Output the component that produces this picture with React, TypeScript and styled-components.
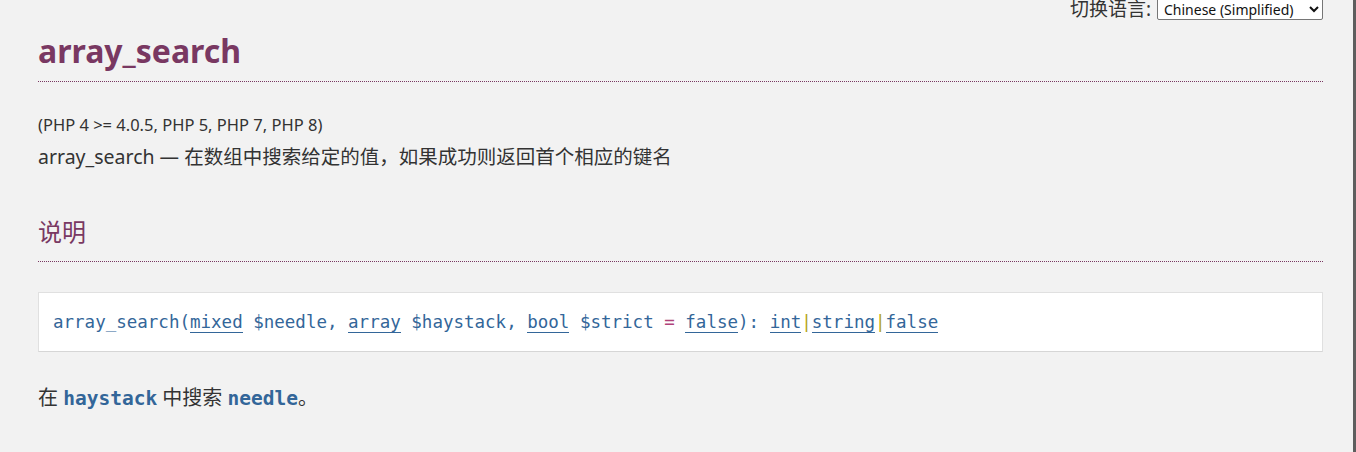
import styled, { createGlobalStyle } from 'styled-components'

const GlobalStyle = createGlobalStyle`
    html, body {
        margin: 0;
        padding: 0;
        background-color: #f2f2f2;
        overflow: hidden;
    }
    body {
        font-family: 'Noto Sans', 'Noto Sans CJK SC', sans-serif;
        color: #333;
    }
`

const sans = `'Noto Sans', 'Noto Sans CJK SC', sans-serif`
const mono = `'DejaVu Sans Mono', 'Noto Sans CJK SC', monospace`

export default function App() {
    return (
        <Screen>
            <GlobalStyle />
            <Page>
                <LangBar>
                    <LangLabel htmlFor="changelang">切换语言:</LangLabel>
                    <LangSelect id="changelang" defaultValue="zh">
                        <option value="en">English</option>
                        <option value="zh">Chinese (Simplified)</option>
                    </LangSelect>
                </LangBar>

                <Title>array_search</Title>

                <VerInfo>(PHP 4 &gt;= 4.0.5, PHP 5, PHP 7, PHP 8)</VerInfo>
                <RefPurpose>array_search — 在数组中搜索给定的值，如果成功则返回首个相应的键名</RefPurpose>

                <SectionTitle>说明</SectionTitle>

                <MethodSynopsis>
                    <MethodName>array_search</MethodName>(<TypeLink>mixed</TypeLink> <Var>$needle</Var>,{' '}
                    <TypeLink>array</TypeLink> <Var>$haystack</Var>, <TypeLink>bool</TypeLink> <Var>$strict</Var>{' '}
                    <Op>=</Op> <TypeLink>false</TypeLink>): <TypeLink>int</TypeLink>
                    <Pipe>|</Pipe>
                    <TypeLink>string</TypeLink>
                    <Pipe>|</Pipe>
                    <TypeLink>false</TypeLink>
                </MethodSynopsis>

                <Para>
                    在 <Param>haystack</Param> 中搜索 <Param>needle</Param>。
                </Para>
            </Page>
            <Edge />
        </Screen>
    )
}

const Screen = styled.div`
    display: flex;
    width: 1356px;
    height: 452px;
    overflow: hidden;
`

const Page = styled.div`
    flex: 1;
    padding: 0 30px 0 38px;
    display: flex;
    flex-direction: column;
`

const Edge = styled.div`
    width: 3px;
    background-color: #5e5e5e;
`

const LangBar = styled.div`
    display: flex;
    justify-content: flex-end;
    align-items: center;
    gap: 6px;
    height: 20px;
    margin-top: -1px;
`

const LangLabel = styled.label`
    font-family: ${sans};
    font-size: 19px;
    line-height: 20px;
    color: #333;
`

const LangSelect = styled.select`
    font-family: ${sans};
    font-size: 14px;
    height: 22px;
    width: 166px;
    padding: 0 2px;
    border: 1px solid #767676;
    border-radius: 2px;
    background: #fff;
    color: #111;
`

const Title = styled.h1`
    margin: 10px 0 0 0;
    font-family: ${sans};
    font-size: 32px;
    font-weight: 700;
    line-height: 44px;
    color: #793862;
    padding-bottom: 8px;
    border-bottom: 1px dotted #793862;
`

const VerInfo = styled.p`
    margin: 32px 0 0 0;
    font-family: ${sans};
    font-size: 16.5px;
    line-height: 22px;
    color: #333;
`

const RefPurpose = styled.p`
    margin: 7px 0 0 0;
    font-family: ${sans};
    font-size: 19.5px;
    line-height: 28px;
    color: #333;
`

const SectionTitle = styled.h2`
    margin: 44px 0 0 0;
    font-family: ${sans};
    font-size: 24px;
    font-weight: 400;
    line-height: 34px;
    color: #793862;
    padding-bottom: 12px;
    border-bottom: 1px dotted #793862;
`

const MethodSynopsis = styled.div`
    margin-top: 30px;
    height: 58px;
    line-height: 58px;
    white-space: nowrap;
    padding: 0 14px;
    background-color: #fff;
    border: 1px solid #e0e0e0;
    border-bottom-color: #d6d6d6;
    font-family: ${mono};
    font-size: 17.5px;
    color: #369;
`

const MethodName = styled.span`
    color: #369;
`

const TypeLink = styled.span`
    color: #369;
    border-bottom: 1px solid #369;
`

const Var = styled.span`
    color: #369;
`

const Op = styled.span`
    color: #b0437a;
`

const Pipe = styled.span`
    color: #b5a51c;
`

const Para = styled.p`
    margin: 32px 0 0 0;
    font-family: ${sans};
    font-size: 20px;
    line-height: 28px;
    color: #333;
`

const Param = styled.code`
    font-family: ${mono};
    font-weight: 700;
    font-size: 19.5px;
    color: #369;
`
